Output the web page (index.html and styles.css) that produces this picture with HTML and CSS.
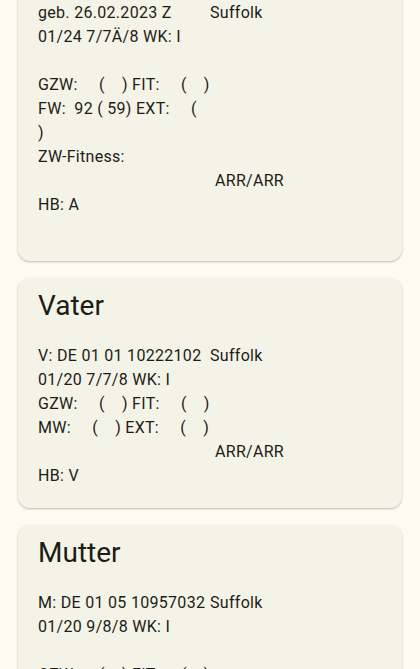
FILE: index.html
```html
<!DOCTYPE html>
<html>
<head>
    <meta charset="utf-8">
    <link rel="stylesheet" href="styles.css">
</head>
<body>
    <div class="list">
        <div class="card">
            <div class="rows">
                <div class="cell">geb. 26.02.2023 Z</div><div class="cell">Suffolk</div>
                <div class="cell">01/24 7/7Ä/8 WK: I</div><div class="cell"></div>
                <div class="cell empty"></div><div class="cell"></div>
                <div class="cell">GZW:     (    ) FIT:     (    )</div><div class="cell"></div>
                <div class="cell">FW:  92 ( 59) EXT:     (    )</div><div class="cell"></div>
                <div class="cell">ZW-Fitness:</div><div class="cell"></div>
                <div class="cell"></div><div class="cell right">ARR/ARR</div>
                <div class="cell">HB: A</div><div class="cell"></div>
                <div class="cell empty"></div><div class="cell"></div>
            </div>
        </div>

        <div class="card">
            <h2 class="title">Vater</h2>
            <div class="rows">
                <div class="cell">V: DE 01 01 10222102</div><div class="cell">Suffolk</div>
                <div class="cell">01/20 7/7/8 WK: I</div><div class="cell"></div>
                <div class="cell">GZW:     (    ) FIT:     (    )</div><div class="cell"></div>
                <div class="cell">MW:     (    ) EXT:     (    )</div><div class="cell"></div>
                <div class="cell"></div><div class="cell right">ARR/ARR</div>
                <div class="cell">HB: V</div><div class="cell"></div>
            </div>
        </div>

        <div class="card">
            <h2 class="title">Mutter</h2>
            <div class="rows">
                <div class="cell">M: DE 01 05 10957032</div><div class="cell">Suffolk</div>
                <div class="cell">01/20 9/8/8 WK: I</div><div class="cell"></div>
                <div class="cell empty"></div><div class="cell"></div>
                <div class="cell">GZW:     (    ) FIT:     (    )</div><div class="cell"></div>
                <div class="cell">FW:  88 ( 61) EXT:     (    )</div><div class="cell"></div>
                <div class="cell">ZW-Fitness:</div><div class="cell"></div>
                <div class="cell"></div><div class="cell right">ARR/ARR</div>
                <div class="cell">HB: A</div><div class="cell"></div>
            </div>
        </div>
    </div>
</body>
</html>
```

FILE: styles.css
```css
html {
    background: #fbfbf1;
}

body {
    margin: 0;
    font-family: Roboto, "Noto Sans", Arial, sans-serif;
    color: #1d1c16;
}

.list {
    display: flex;
    flex-direction: column;
    gap: 17px;
    padding: 0 18px;
    margin-top: -19px; /* liste ist etwas nach oben gescrollt */
}

.card {
    background: #f4f3e8;
    border-radius: 12px;
    box-shadow: 0 1px 2px rgba(0, 0, 0, 0.2), 0 1px 3px rgba(0, 0, 0, 0.07);
    padding: 10px 20px 20px;
}

.list .card:first-child {
    padding-top: 20px;
}

.title {
    margin: 0 0 20px;
    font-size: 28px;
    line-height: 36px;
    font-weight: 400;
}

.rows {
    display: grid;
    grid-template-columns: 1fr 1fr;
    font-size: 16px;
    line-height: 24px;
    letter-spacing: 0.3px;
}

.cell {
    white-space: pre-wrap;
    min-height: 24px;
}

.right {
    padding-left: 5px;
}
```
